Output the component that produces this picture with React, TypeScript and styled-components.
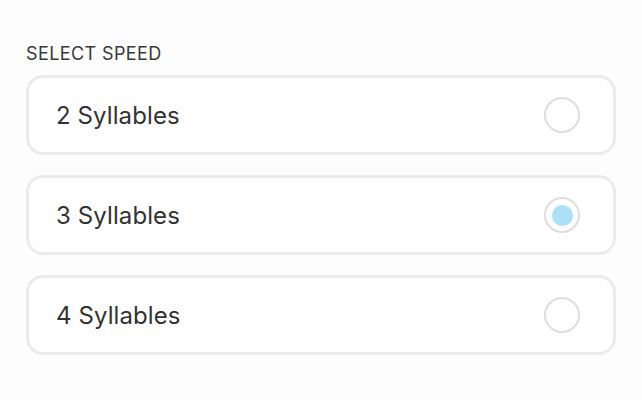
import React, { useState } from "react";
import styled, { createGlobalStyle } from "styled-components";

const Global = createGlobalStyle`
  html, body { margin: 0; padding: 0; background: #fdfdfd; }
  body { font-family: Inter, "Noto Sans", sans-serif; }
`;

const Page = styled.div`
  width: 642px;
  height: 400px;
  box-sizing: border-box;
  padding: 44px 26px 0 26px;
  display: flex;
  flex-direction: column;
`;

const Label = styled.div`
  font-size: 18px;
  letter-spacing: 0.4px;
  color: #3a3a3a;
  line-height: 20px;
  margin-bottom: 11px;
`;

const List = styled.div`
  display: flex;
  flex-direction: column;
  gap: 20px;
`;

const Card = styled.div`
  box-sizing: border-box;
  height: 80px;
  border: 3px solid #ebebeb;
  border-radius: 17px;
  background: #fefefe;
  display: flex;
  align-items: center;
  justify-content: space-between;
  padding: 0 33px 0 27px;
  cursor: pointer;
`;

const Title = styled.span`
  font-size: 24px;
  color: #333;
  letter-spacing: 0.1px;
`;

const Radio = styled.div<{ $on: boolean }>`
  box-sizing: border-box;
  width: 36px;
  height: 36px;
  border-radius: 50%;
  border: 2px solid #dedede;
  display: flex;
  align-items: center;
  justify-content: center;
  &::after {
    content: "";
    width: 21px;
    height: 21px;
    border-radius: 50%;
    background: #ade0f7;
    display: ${(p) => (p.$on ? "block" : "none")};
  }
`;

const options = ["2 Syllables", "3 Syllables", "4 Syllables"];

export default function App() {
  const [sel, setSel] = useState(1);
  return (
    <>
      <Global />
      <Page>
        <Label>SELECT SPEED</Label>
        <List>
          {options.map((o, i) => (
            <Card key={o} onClick={() => setSel(i)}>
              <Title>{o}</Title>
              <Radio $on={sel === i} />
            </Card>
          ))}
        </List>
      </Page>
    </>
  );
}
